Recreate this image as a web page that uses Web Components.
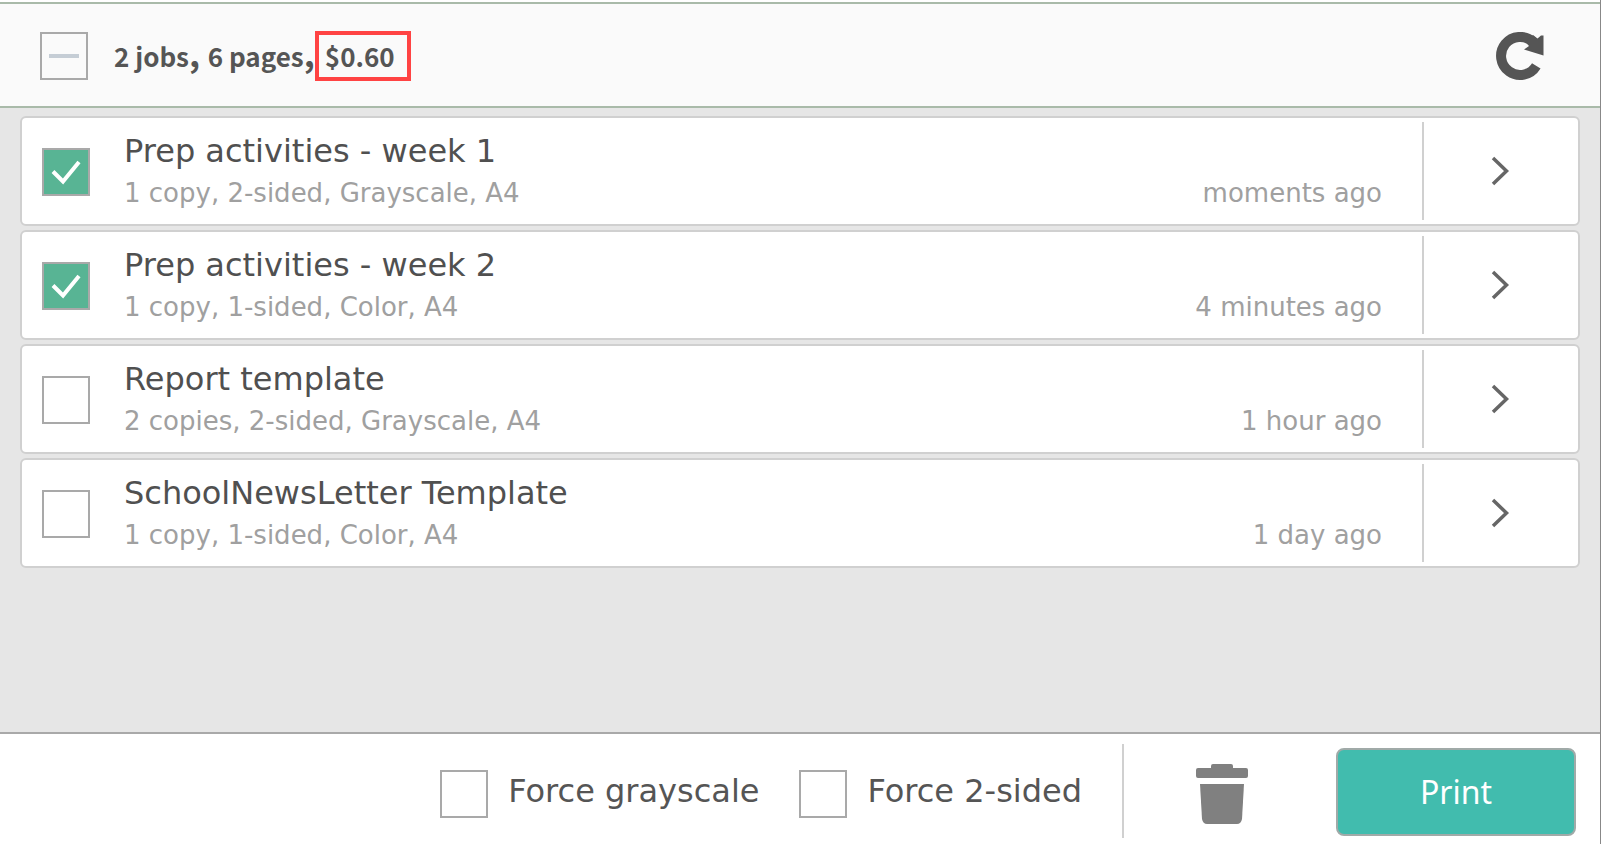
<!DOCTYPE html>
<html lang="en">
<head>
<meta charset="utf-8">
<meta name="viewport" content="width=device-width, initial-scale=1">
<title>Print jobs</title>
<style>
  body { margin: 0; background: #fff; font-family: "DejaVu Sans", sans-serif; color: #505050; }
</style>
</head>
<body>
<print-release></print-release>

<script>
const define = (name, markup, setup) => {
  const template = document.createElement('template');
  template.innerHTML = markup;
  customElements.define(name, class extends HTMLElement {
    connectedCallback() {
      if (this.shadowRoot) return;
      const root = this.attachShadow({ mode: 'open' });
      root.append(template.content.cloneNode(true));
      if (setup) setup(this, root);
    }
  });
};

// Square tick box with its slotted label
define('check-field', `
  <style>
    :host { display: block; }
    label { display: flex; align-items: center; gap: var(--label-gap, 34px); cursor: pointer; }
    input {
      appearance: none; box-sizing: border-box; flex: none;
      width: 48px; height: 48px; margin: var(--box-margin, 0);
      border: 2px solid #a9a9a9; background: transparent center / 44px 44px no-repeat;
    }
    input:checked {
      background-color: #58b494;
      background-image: url("data:image/svg+xml,%3Csvg xmlns='http://www.w3.org/2000/svg' viewBox='0 0 44 44'%3E%3Cpath d='M9 21.500 19 31.500 35 12' fill='none' stroke='white' stroke-width='4'/%3E%3C/svg%3E");
    }
    input:indeterminate {
      background-image: linear-gradient(#c5cdd5, #c5cdd5);
      background-size: 30px 4px;
    }
  </style>
  <label><input type="checkbox"><slot></slot></label>
`, (host, root) => {
  const box = root.querySelector('input');
  box.checked = host.hasAttribute('checked');
  box.indeterminate = host.hasAttribute('mixed');
});

// Totals of the selected jobs
define('job-summary', `
  <style>
    :host {
      display: flex; align-items: center; justify-content: space-between;
      box-sizing: border-box; height: 106px; margin-top: 2px; padding: 2px 56px 0 40px;
      background: #fafafa; border: solid #a9baa9; border-width: 2px 0;
    }
    check-field { --label-gap: 26px; }
    .totals {
      display: flex; align-items: baseline;
      font: bold 26px/42px "Noto Sans CJK JP", "Noto Sans", sans-serif; color: #555;
    }
    .comma { font-size: 34px; line-height: 0; white-space: pre; }
    .cost { border: 4px solid #ff4343; padding: 0 12px 0 6px; }
    button { border: 0; padding: 0; background: none; cursor: pointer; }
    svg { display: block; }
  </style>
  <check-field mixed><span class="totals"><span><slot name="jobs"></slot><span class="comma">, </span><slot name="pages"></slot><span class="comma">,</span></span><span class="cost"><slot name="cost"></slot></span></span></check-field>
  <button type="button" aria-label="Refresh">
    <svg width="48" height="48" viewBox="0 0 48 48">
      <path d="M40.3 33.8A19 19 0 1 1 37 10" fill="none" stroke="#555" stroke-width="10"/>
      <path d="M47.500 3.500V23.500L28 17.500L33 14L29.700 10L37 3L41.500 6.500L45 3.500Z" fill="#555"/>
    </svg>
  </button>
`);

// One held print job
define('job-row', `
  <style>
    :host {
      display: flex; align-items: center; box-sizing: border-box; height: 110px;
      background: #fff; border: 2px solid #d0d0d0; border-radius: 6px;
    }
    check-field { flex: 1; padding: 2px 0 0 20px; }
    .text { display: grid; gap: 2px; line-height: 40px; }
    .title { font-size: 32px; }
    .detail, .age { font-size: 26px; color: #a0a0a0; }
    .age { align-self: flex-end; padding: 0 40px 11px 0; line-height: 40px; }
    button {
      width: 156px; height: 98px; padding: 0; border: 0; border-left: 2px solid #d0d0d0;
      background: none; cursor: pointer; display: grid; place-items: center;
    }
  </style>
  <check-field><span class="text"><span class="title"><slot name="title"></slot></span><span class="detail"><slot name="detail"></slot></span></span></check-field>
  <span class="age"><slot name="age"></slot></span>
  <button type="button" aria-label="Job details">
    <svg width="20" height="32" viewBox="0 0 20 32"><path d="M2 3 15.500 16 2 29" fill="none" stroke="#666" stroke-width="3.5"/></svg>
  </button>
`, (host, root) => {
  root.querySelector('check-field').toggleAttribute('checked', host.hasAttribute('selected'));
  const box = root.querySelector('check-field').shadowRoot?.querySelector('input');
  if (box) box.checked = host.hasAttribute('selected');
});

// Options and actions for the selection
define('action-bar', `
  <style>
    :host {
      display: flex; align-items: center; justify-content: flex-end; gap: 40px;
      padding: 10px 24px 6px; background: #fff; border-top: 2px solid #a9a9a9;
      font-size: 32px; line-height: 40px;
    }
    check-field { --label-gap: 20px; --box-margin: 6px 0 0; color: #555; }
    .actions { display: flex; align-items: center; border-left: 2px solid #d0d0d0; }
    button { cursor: pointer; padding: 0; }
    .delete { border: 0; background: none; margin: 6px 88px 0 72px; }
    .print {
      box-sizing: border-box; width: 240px; height: 88px; margin: 4px 0 2px;
      border: 2px solid #a0aaa8; border-radius: 8px; background: #41bcae;
      color: #fff; font: 32px/40px "Noto Sans", sans-serif;
    }
    svg { display: block; }
  </style>
  <check-field>Force grayscale</check-field>
  <check-field>Force 2-sided</check-field>
  <div class="actions">
    <button class="delete" type="button" aria-label="Delete">
      <svg width="52" height="60" viewBox="0 0 52 60" fill="#808080">
        <path d="M15 4V2Q15 0 17 0H35Q37 0 37 2V4H50Q52 4 52 6V12Q52 14 50 14H2Q0 14 0 12V6Q0 4 2 4Z"/>
        <path d="M4 20H48L46 55Q45 60 41 60H11Q7 60 6 55Z"/>
      </svg>
    </button>
    <button class="print" type="button">Print</button>
  </div>
`);

define('print-release', `
  <style>
    :host {
      display: flex; flex-direction: column; box-sizing: border-box;
      min-height: 100vh; border-right: 1px solid #888;
    }
    main { flex: 1; display: flex; flex-direction: column; gap: 4px; padding: 8px 20px; background: #e6e6e6; }
  </style>
  <job-summary><span slot="jobs">2 jobs</span><span slot="pages">6 pages</span><span slot="cost">$0.60</span></job-summary>
  <main>
    <job-row selected><span slot="title">Prep activities - week 1</span><span slot="detail">1 copy, 2-sided, Grayscale, A4</span><span slot="age">moments ago</span></job-row>
    <job-row selected><span slot="title">Prep activities - week 2</span><span slot="detail">1 copy, 1-sided, Color, A4</span><span slot="age">4 minutes ago</span></job-row>
    <job-row><span slot="title">Report template</span><span slot="detail">2 copies, 2-sided, Grayscale, A4</span><span slot="age">1 hour ago</span></job-row>
    <job-row><span slot="title">SchoolNewsLetter Template</span><span slot="detail">1 copy, 1-sided, Color, A4</span><span slot="age">1 day ago</span></job-row>
  </main>
  <action-bar></action-bar>
`);
</script>
</body>
</html>
